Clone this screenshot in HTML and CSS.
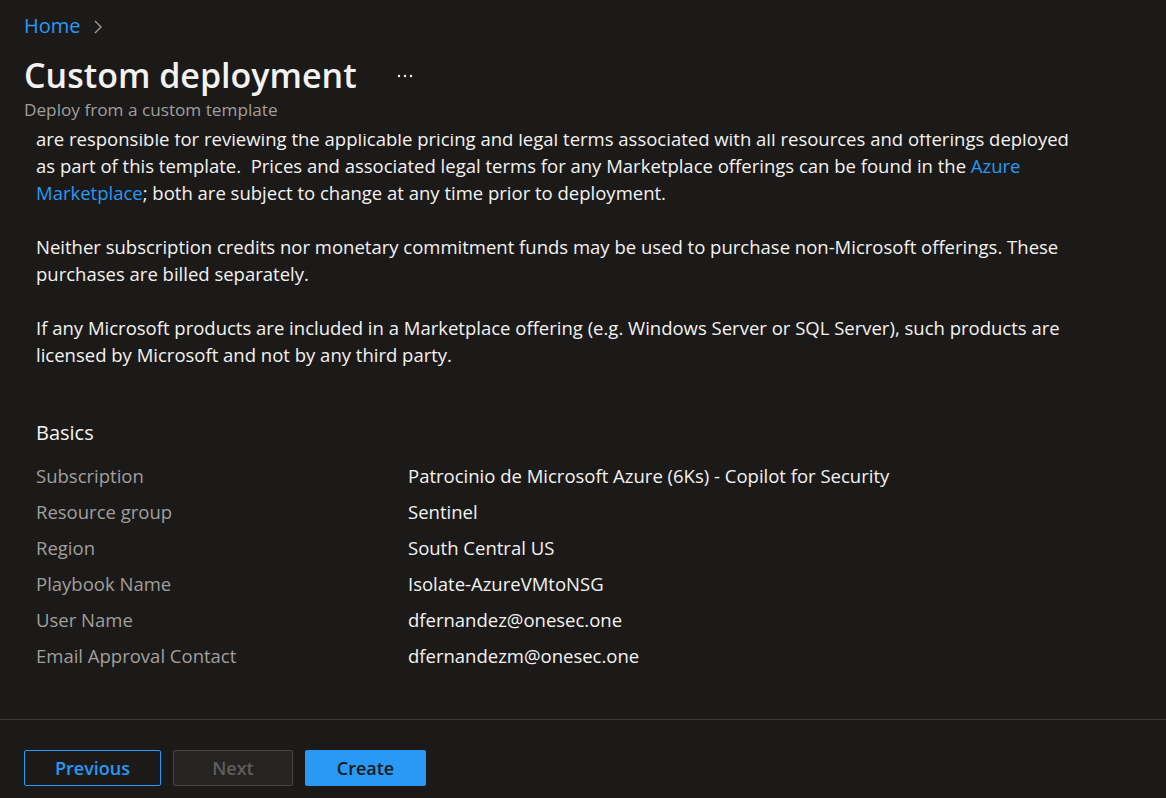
FILE: index.html
```html
<!DOCTYPE html>
<html lang="en">
<head>
<meta charset="utf-8">
<title>Custom deployment</title>
<link rel="stylesheet" href="styles.css">
</head>
<body>
<div class="page">
  <header class="header">
    <nav class="breadcrumb">
      <a class="link" href="#">Home</a>
      <svg class="chev" width="10" height="16" viewBox="0 0 10 16"><path d="M2 2 L8 8 L2 14" fill="none" stroke="#a19f9d" stroke-width="1.3"/></svg>
    </nav>
    <div class="title-row">
      <h1 class="title">Custom deployment</h1>
      <svg class="more" width="16" height="4" viewBox="0 0 16 4"><circle cx="2" cy="2" r="1.2" fill="#f3f2f1"/><circle cx="8" cy="2" r="1.2" fill="#f3f2f1"/><circle cx="14" cy="2" r="1.2" fill="#f3f2f1"/></svg>
    </div>
    <div class="subtitle">Deploy from a custom template</div>
  </header>
  <main class="content">
    <div class="scroll">
      <p class="para">are responsible for reviewing the applicable pricing and legal terms associated with all resources and offerings deployed as part of this template.&nbsp; Prices and associated legal terms for any Marketplace offerings can be found in the <a class="link" href="#">Azure Marketplace</a>; both are subject to change at any time prior to deployment.</p>
      <p class="para">Neither subscription credits nor monetary commitment funds may be used to purchase non-Microsoft offerings. These purchases are billed separately.</p>
      <p class="para">If any Microsoft products are included in a Marketplace offering (e.g. Windows Server or SQL Server), such products are licensed by Microsoft and not by any third party.</p>
      <h2 class="section">Basics</h2>
      <dl class="summary">
        <dt>Subscription</dt><dd>Patrocinio de Microsoft Azure (6Ks) - Copilot for Security</dd>
        <dt>Resource group</dt><dd>Sentinel</dd>
        <dt>Region</dt><dd>South Central US</dd>
        <dt>Playbook Name</dt><dd>Isolate-AzureVMtoNSG</dd>
        <dt>User Name</dt><dd>dfernandez@onesec.one</dd>
        <dt>Email Approval Contact</dt><dd>dfernandezm@onesec.one</dd>
      </dl>
    </div>
  </main>
  <footer class="footer">
    <button class="btn btn-outline">Previous</button>
    <button class="btn btn-disabled">Next</button>
    <button class="btn btn-primary">Create</button>
  </footer>
</div>
</body>
</html>
```

FILE: styles.css
```css
* { box-sizing: border-box; }
html, body { margin: 0; padding: 0; }
body {
  background: #1b1a19;
  color: #f3f2f1;
  font-family: "Open Sans", "Noto Sans", sans-serif;
  font-size: 18.5px;
}
.page {
  height: 798px;
  display: flex;
  flex-direction: column;
}
.header {
  padding: 12px 24px 0 24px;
  height: 134px;
  flex: none;
}
.link { color: #2899f5; text-decoration: none; }
.breadcrumb {
  display: flex;
  align-items: center;
  gap: 12px;
  font-size: 20px;
  line-height: 28px;
}
.chev { margin-top: 1px; }
.title-row {
  display: flex;
  align-items: center;
  margin-top: 14px;
  height: 42px;
}
.title {
  margin: 0;
  font-size: 34px;
  font-weight: 600;
  line-height: 42px;
}
.more {
  margin-left: 40px;
  margin-top: 2px;
}
.subtitle {
  color: #a19f9d;
  font-size: 17.2px;
  line-height: 24px;
  margin-top: 2px;
}
.content {
  flex: 1;
  overflow: hidden;
  padding: 0 0 0 36px;
}
.scroll { margin-top: -9px; }
.para {
  margin: 0 0 27px 0;
  line-height: 27px;
  max-width: 1048px;
}
.section {
  margin: 51px 0 11px 0;
  font-size: 20px;
  font-weight: 400;
  line-height: 27px;
}
.summary {
  margin: 0;
  display: grid;
  grid-template-columns: 372px 1fr;
  grid-auto-rows: 36px;
  align-items: center;
}
.summary dt { color: #a19f9d; }
.summary dd { margin: 0; color: #f3f2f1; }
.footer {
  flex: none;
  height: 79px;
  border-top: 1px solid #3b3a39;
  padding: 30px 24px 0 24px;
  display: flex;
  gap: 12px;
  align-items: flex-start;
}
.btn {
  height: 36px;
  border-radius: 2px;
  font-family: inherit;
  font-size: 18px;
  font-weight: 600;
  line-height: 33px;
  padding: 0 16px;
  border: 1px solid transparent;
}
.btn-outline {
  width: 137px;
  background: transparent;
  border-color: #2899f5;
  color: #2899f5;
}
.btn-disabled {
  width: 120px;
  background: #252423;
  border-color: #484644;
  color: #605e5c;
}
.btn-primary {
  width: 121px;
  background: #2899f5;
  color: #1b1a19;
}
```
